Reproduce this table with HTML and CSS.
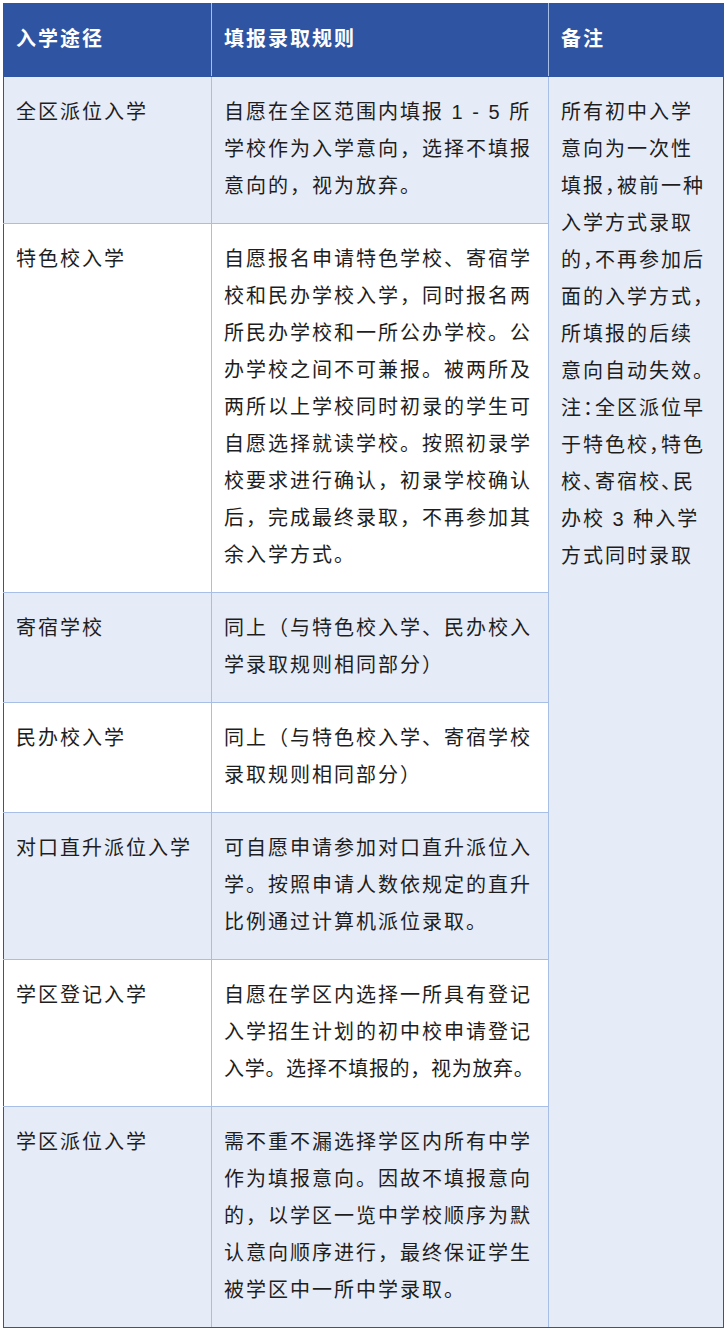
FILE: index.html
```html
<!DOCTYPE html>
<html lang="zh-CN">
<head>
<meta charset="utf-8">
<title>入学途径</title>
<link rel="stylesheet" href="styles.css">
</head>
<body>
<div class="page">
  <table class="rules">
    <colgroup>
      <col class="c-route">
      <col class="c-rule">
      <col class="c-note">
    </colgroup>
    <thead>
      <tr>
        <th>入学途径</th>
        <th>填报录取规则</th>
        <th>备注</th>
      </tr>
    </thead>
    <tbody>
      <tr class="alt">
        <td>全区派位入学</td>
        <td>自愿在全区范围内填报 1 - 5 所学校作为入学意向，选择不填报意向的，视为放弃。</td>
        <td class="note" rowspan="7">所有初中入学意向为一次性填报，被前一种入学方式录取的，不再参加后面的入学方式，所填报的后续意向自动失效。注：全区派位早于特色校，特色校、寄宿校、民办校 3 种入学方式同时录取</td>
      </tr>
      <tr>
        <td>特色校入学</td>
        <td>自愿报名申请特色学校、寄宿学校和民办学校入学，同时报名两所民办学校和一所公办学校。公办学校之间不可兼报。被两所及两所以上学校同时初录的学生可自愿选择就读学校。按照初录学校要求进行确认，初录学校确认后，完成最终录取，不再参加其余入学方式。</td>
      </tr>
      <tr class="alt">
        <td>寄宿学校</td>
        <td>同上（与特色校入学、民办校入学录取规则相同部分）</td>
      </tr>
      <tr>
        <td>民办校入学</td>
        <td>同上（与特色校入学、寄宿学校录取规则相同部分）</td>
      </tr>
      <tr class="alt">
        <td>对口直升派位入学</td>
        <td>可自愿申请参加对口直升派位入学。按照申请人数依规定的直升比例通过计算机派位录取。</td>
      </tr>
      <tr>
        <td>学区登记入学</td>
        <td>自愿在学区内选择一所具有登记入学招生计划的初中校申请登记<span class="tight">入学。选择不填报的，视为放弃。</span></td>
      </tr>
      <tr class="alt">
        <td>学区派位入学</td>
        <td>需不重不漏选择学区内所有中学作为填报意向。因故不填报意向的，以学区一览中学校顺序为默认意向顺序进行，最终保证学生被学区中一所中学录取。</td>
      </tr>
    </tbody>
  </table>
</div>
</body>
</html>
```

FILE: styles.css
```css
html, body {
  margin: 0;
  padding: 0;
  background: #ffffff;
}

.page {
  padding: 3px 4px 4px 3px;
}

.rules {
  width: 720px;
  border-collapse: collapse;
  table-layout: fixed;
  border: 1px solid #2f54a2;
  font-family: "Liberation Sans", "Noto Sans CJK SC", sans-serif;
  font-size: 20px;
  line-height: 37px;
  letter-spacing: 2px;
  color: #1e1e1e;
}

.c-route { width: 208px; }
.c-rule { width: 337px; }
.c-note { width: 175px; }

.rules th,
.rules td {
  padding: 17px 12px 18px 12px;
  text-align: left;
  vertical-align: top;
  border: 1px solid #a7bee6;
}

.rules th {
  background: #2f54a2;
  color: #ffffff;
  font-weight: bold;
  border-top-color: #2f54a2;
  border-bottom-color: #2f54a2;
}

.rules th:first-child { border-left-color: #2f54a2; }
.rules th:last-child { border-right-color: #2f54a2; }

.rules td:first-child { border-left-color: #2f54a2; }

.rules tbody tr:last-child td { border-bottom-color: #2f54a2; }

.rules tr.alt td {
  background: #e6ecf7;
}

.rules td.note {
  background: #e6ecf7;
  border-right-color: #2f54a2;
  border-bottom-color: #2f54a2;
  font-feature-settings: "halt";
}

.tight {
  letter-spacing: 0.7px;
}
```
